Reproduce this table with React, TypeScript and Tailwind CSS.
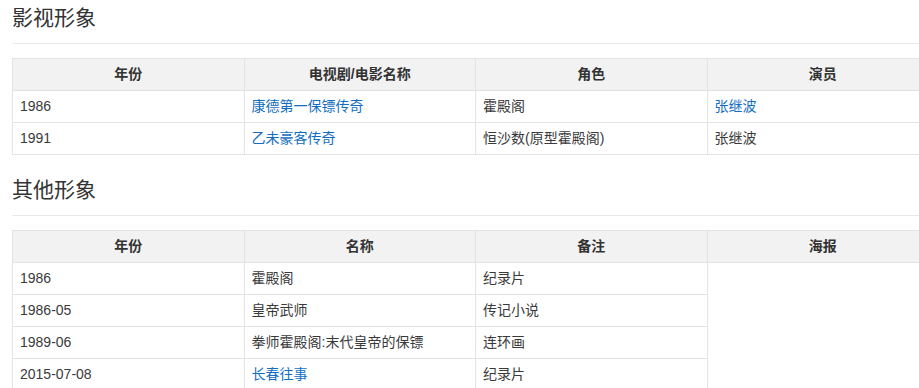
const font = { fontFamily: '"Liberation Sans", "Noto Sans CJK SC", sans-serif' };

type Cell = { text: string; link?: boolean };

const filmRows: Cell[][] = [
  [{ text: '1986' }, { text: '康德第一保镖传奇', link: true }, { text: '霍殿阁' }, { text: '张继波', link: true }],
  [{ text: '1991' }, { text: '乙未豪客传奇', link: true }, { text: '恒沙数(原型霍殿阁)' }, { text: '张继波' }],
];

const otherRows: Cell[][] = [
  [{ text: '1986' }, { text: '霍殿阁' }, { text: '纪录片' }],
  [{ text: '1986-05' }, { text: '皇帝武师' }, { text: '传记小说' }],
  [{ text: '1989-06' }, { text: '拳师霍殿阁:末代皇帝的保镖' }, { text: '连环画' }],
  [{ text: '2015-07-08' }, { text: '长春往事', link: true }, { text: '纪录片' }],
];

function SectionTitle({ title }: { title: string }) {
  return (
    <>
      <h2 className="text-[21px] leading-[36px] font-normal text-[#333]">{title}</h2>
      <div className="mt-[7px] h-px bg-[#eaeaea]" />
    </>
  );
}

function Th({ children }: { children: string }) {
  return (
    <th className="h-[32px] border border-[#e3e3e3] bg-[#f2f2f2] text-center text-[14px] font-bold text-[#333]">
      {children}
    </th>
  );
}

function Td({ cell }: { cell: Cell }) {
  return (
    <td className="h-[32px] border border-[#e3e3e3] px-[7px] text-left text-[14px]">
      <span className={cell.link ? 'text-[#136ec2]' : 'text-[#3a3a3a]'}>{cell.text}</span>
    </td>
  );
}

export default function App() {
  return (
    <div className="w-[919px] h-[388px] overflow-hidden bg-white pl-3" style={font}>
      <SectionTitle title="影视形象" />
      <table className="mt-[14px] w-[927px] table-fixed border-collapse">
        <thead>
          <tr>
            <Th>年份</Th>
            <Th>电视剧/电影名称</Th>
            <Th>角色</Th>
            <Th>演员</Th>
          </tr>
        </thead>
        <tbody>
          {filmRows.map((row, i) => (
            <tr key={i}>
              {row.map((c, j) => (
                <Td key={j} cell={c} />
              ))}
            </tr>
          ))}
        </tbody>
      </table>

      <div className="mt-[17px]">
        <SectionTitle title="其他形象" />
      </div>
      <table className="mt-[14px] w-[927px] table-fixed border-collapse">
        <thead>
          <tr>
            <Th>年份</Th>
            <Th>名称</Th>
            <Th>备注</Th>
            <Th>海报</Th>
          </tr>
        </thead>
        <tbody>
          {otherRows.map((row, i) => (
            <tr key={i}>
              {row.map((c, j) => (
                <Td key={j} cell={c} />
              ))}
              {i === 0 && (
                <td rowSpan={otherRows.length} className="border border-[#e3e3e3]" />
              )}
            </tr>
          ))}
        </tbody>
      </table>
    </div>
  );
}
